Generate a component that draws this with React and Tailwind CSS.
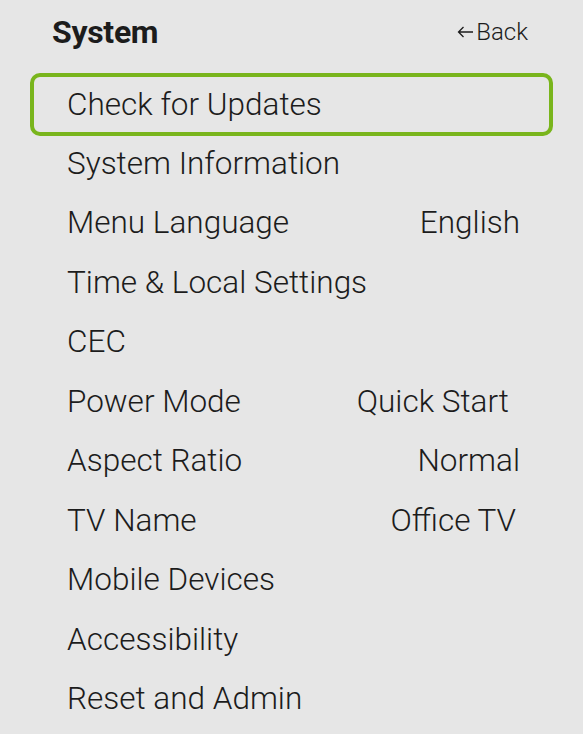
const rows = [
  { label: 'Check for Updates', selected: true },
  { label: 'System Information' },
  { label: 'Menu Language', value: 'English', pr: 'pr-[33px]' },
  { label: 'Time & Local Settings' },
  { label: 'CEC' },
  { label: 'Power Mode', value: 'Quick Start', pr: 'pr-[44px]' },
  { label: 'Aspect Ratio', value: 'Normal', pr: 'pr-[33px]' },
  { label: 'TV Name', value: 'Office TV', pr: 'pr-[37px]' },
  { label: 'Mobile Devices' },
  { label: 'Accessibility' },
  { label: 'Reset and Admin' },
];

export default function App() {
  return (
    <div className="w-[583px] h-[734px] bg-[#e6e6e6] text-[#1c1c1c] font-['Roboto',sans-serif] overflow-hidden">
      {/* Header */}
      <div className="flex items-center justify-between pl-[52px] pr-[55px] pt-[4px] h-[60px]">
        <h1 className="text-[32px] font-bold tracking-[-0.3px]">System</h1>
        <span className="flex items-center gap-[2px] text-[24px] font-light">
          <svg width="17" height="12" viewBox="0 0 17 12" fill="none" stroke="#1c1c1c" strokeWidth="1.3">
            <path d="M16 6H1.5M6.5 1L1.5 6l5 5" />
          </svg>
          Back
        </span>
      </div>

      {/* Menu list */}
      <div className="flex flex-col pl-[30px] pr-[30px] pt-[13px]">
        {rows.map((row) => (
          <div
            key={row.label}
            className={
              row.selected
                ? 'flex items-center justify-between h-[63px] -mb-[2.5px] border-4 border-[#79b51c] rounded-[10px] pl-[33px] pr-[33px]'
                : 'flex items-center justify-between h-[59.5px] pl-[37px] ' + (row.pr || '')
            }
          >
            <span className="text-[31.5px] font-light">{row.label}</span>
            {row.value && <span className="text-[31.5px] font-light">{row.value}</span>}
          </div>
        ))}
      </div>
    </div>
  );
}
